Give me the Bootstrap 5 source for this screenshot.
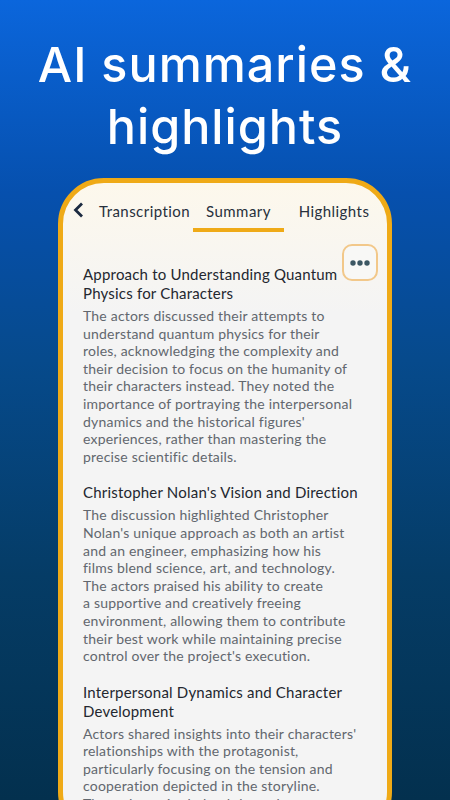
<!DOCTYPE html>
<html><head><meta charset="utf-8">
<link href="https://cdn.jsdelivr.net/npm/bootstrap@5.3.0/dist/css/bootstrap.min.css" rel="stylesheet">
<style>
html,body{height:800px;overflow:hidden}
body{background:linear-gradient(180deg,#0b66dc 0%,#0650ae 24%,#064a8c 45%,#053c66 72%,#03304e 100%);font-family:"Lato",sans-serif}
.hero-title{color:#fff;font-family:"Inter",sans-serif;font-weight:500;font-size:48.5px;line-height:62px;padding-top:34px;height:178px;margin:0;letter-spacing:1px}
.phone-shell{width:334px;height:660px;margin-left:58px;background:linear-gradient(180deg,#fdf8ec 0,#f4f4f4 130px);border:5px solid #efaa17;border-radius:46px;overflow:hidden;position:relative}
.tab-bar{height:49px;color:#27303c;font-size:15px;letter-spacing:.45px;padding-left:10px}
.back-icon{flex:0 0 11px;margin:19px 15px 0 0}
.tab-item{padding-top:17px;text-align:center;white-space:nowrap}
.tab-a{flex:0 0 94px;text-align:left}
.tab-b{flex:0 0 91px;border-bottom:4px solid #efaa17;height:49px}
.tab-c{flex:0 0 100px}
.body-text{padding:33px 0 0 20px;white-space:nowrap}
.sec-title{font-size:15px;font-weight:400;line-height:19px;color:#23272f;margin:0 0 4px;letter-spacing:.2px}
.sec-text{font-size:14px;line-height:17.6px;color:#62676e;margin:0 0 18px;letter-spacing:.2px}
.more-btn{position:absolute;left:279px;top:61px;width:36px;height:37px;border:2px solid #f2c88a;border-radius:10px;background:#f8f8f6}
</style></head><body>
<h1 class="hero-title text-center">AI summaries &amp;<br>highlights</h1>
<div class="phone-shell">
<div class="tab-bar d-flex">
<svg class="back-icon" width="11" height="16" viewBox="0 0 11 16"><path d="M9 1.5 2.5 8 9 14.5" fill="none" stroke="#1b2a40" stroke-width="2.8"/></svg>
<div class="tab-item tab-a">Transcription</div><div class="tab-item tab-b">Summary</div><div class="tab-item tab-c">Highlights</div>
</div>
<div class="more-btn d-flex align-items-center justify-content-center"><svg width="20" height="6" viewBox="0 0 20 6"><circle cx="3" cy="3" r="2.7" fill="#3c5763"/><circle cx="10" cy="3" r="2.7" fill="#3c5763"/><circle cx="17" cy="3" r="2.7" fill="#3c5763"/></svg></div>
<div class="body-text">
<h2 class="sec-title">Approach to Understanding Quantum<br>Physics for Characters</h2>
<p class="sec-text">The actors discussed their attempts to<br>understand quantum physics for their<br>roles, acknowledging the complexity and<br>their decision to focus on the humanity of<br>their characters instead. They noted the<br>importance of portraying the interpersonal<br>dynamics and the historical figures'<br>experiences, rather than mastering the<br>precise scientific details.</p>
<h2 class="sec-title">Christopher Nolan's Vision and Direction</h2>
<p class="sec-text">The discussion highlighted Christopher<br>Nolan's unique approach as both an artist<br>and an engineer, emphasizing how his<br>films blend science, art, and technology.<br>The actors praised his ability to create<br>a supportive and creatively freeing<br>environment, allowing them to contribute<br>their best work while maintaining precise<br>control over the project's execution.</p>
<h2 class="sec-title">Interpersonal Dynamics and Character<br>Development</h2>
<p class="sec-text">Actors shared insights into their characters'<br>relationships with the protagonist,<br>particularly focusing on the tension and<br>cooperation depicted in the storyline.<br>These dynamics helped them shape</p>
</div></div>
</body></html>
